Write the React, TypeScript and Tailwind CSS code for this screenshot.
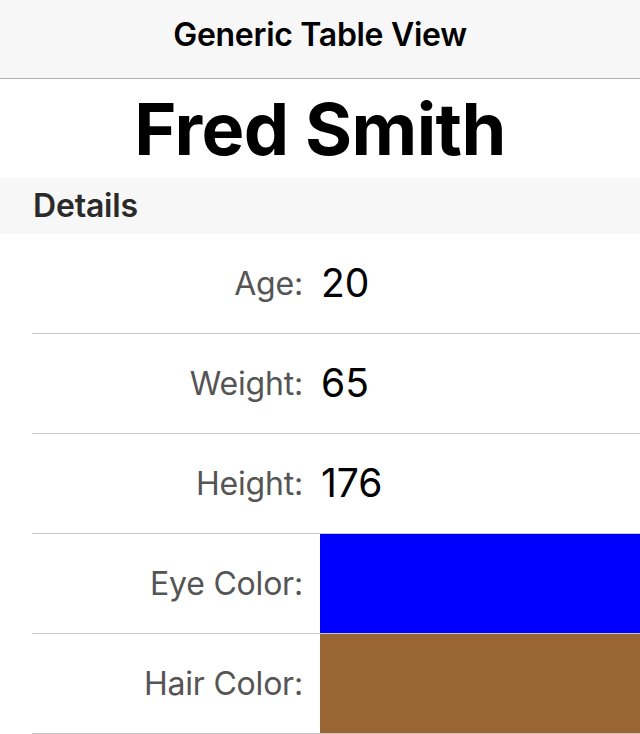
const rows: { label: string; value?: string; color?: string }[] = [
  { label: 'Age:', value: '20' },
  { label: 'Weight:', value: '65' },
  { label: 'Height:', value: '176' },
  { label: 'Eye Color:', color: 'bg-[#0000ff]' },
  { label: 'Hair Color:', color: 'bg-[#996633]' },
];

export default function App() {
  return (
    <div className="w-[640px] bg-white font-['Inter',sans-serif]">
      <header className="h-[79px] bg-[#f7f7f7] border-b border-[#b2b2b2] flex items-center justify-center pb-[8px]">
        <h1 className="text-[32px] font-semibold text-black tracking-[-0.3px]">Generic Table View</h1>
      </header>
      <div className="h-[99px] flex items-center justify-center">
        <h2 className="text-[72px] font-bold text-black tracking-[-0.6px] leading-none">Fred Smith</h2>
      </div>
      <div className="h-[56px] bg-[#f7f7f7] flex items-center pl-[33px]">
        <span className="text-[32px] font-semibold text-[#2a2a2a] tracking-[-0.2px]">Details</span>
      </div>
      <div>
        {rows.map((r) => (
          <div key={r.label} className="ml-[32px] h-[100px] border-b border-[#c8c7cc] flex">
            <div className="w-[288px] pr-[17px] flex items-center justify-end text-[32px] text-[#555555] tracking-[-0.2px]">
              {r.label}
            </div>
            {r.color ? (
              <div className={`flex-1 ${r.color}`} />
            ) : (
              <div className="flex-1 flex items-center pl-px text-[39px] text-black">{r.value}</div>
            )}
          </div>
        ))}
      </div>
    </div>
  );
}
